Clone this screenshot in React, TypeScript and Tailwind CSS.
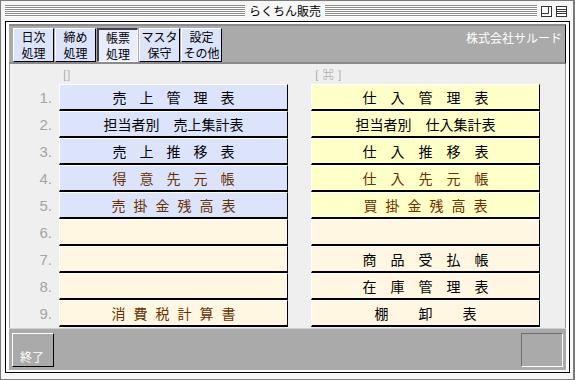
import React from 'react';

const JP = "font-['Noto_Sans_CJK_JP','Noto_Sans',sans-serif]";

const BLUE = 'bg-[#dce4fc]';
const YELLOW = 'bg-[#ffffc8]';
const CREAM = 'bg-[#fff7e1]';

type Item = {
  text: string;
  gap: string; // '' = no spacing, render as one string
  brown?: boolean;
  bg: string;
};

const leftItems: Item[] = [
  { text: '売上管理表', gap: 'gap-[13px]', bg: BLUE },
  { text: '担当者別　売上集計表', gap: '', bg: BLUE },
  { text: '売上推移表', gap: 'gap-[13px]', bg: BLUE },
  { text: '得意先元帳', gap: 'gap-[13px]', brown: true, bg: BLUE },
  { text: '売掛金残高表', gap: 'gap-[8px]', brown: true, bg: BLUE },
  { text: '', gap: '', bg: CREAM },
  { text: '', gap: '', bg: CREAM },
  { text: '', gap: '', bg: CREAM },
  { text: '消費税計算書', gap: 'gap-[8px]', brown: true, bg: CREAM },
];

const rightItems: Item[] = [
  { text: '仕入管理表', gap: 'gap-[14px]', bg: YELLOW },
  { text: '担当者別　仕入集計表', gap: '', bg: YELLOW },
  { text: '仕入推移表', gap: 'gap-[14px]', bg: YELLOW },
  { text: '仕入先元帳', gap: 'gap-[14px]', brown: true, bg: YELLOW },
  { text: '買掛金残高表', gap: 'gap-[8px]', brown: true, bg: YELLOW },
  { text: '', gap: '', bg: CREAM },
  { text: '商品受払帳', gap: 'gap-[14px]', bg: CREAM },
  { text: '在庫管理表', gap: 'gap-[14px]', bg: CREAM },
  { text: '棚卸表', gap: 'gap-[30px]', bg: CREAM },
];

const tabs = [
  ['日次', '処理'],
  ['締め', '処理'],
  ['帳票', '処理'],
  ['マスタ', '保守'],
  ['設定', 'その他'],
];

const Stripes = ({ className }: { className: string }) => (
  <div
    className={`h-[12px] bg-[image:repeating-linear-gradient(to_bottom,#8c8c8c_0px,#8c8c8c_1px,#ffffff_1px,#ffffff_2px)] ${className}`}
  />
);

const ListButton = ({ item }: { item: Item }) => (
  <div
    className={`flex h-[27px] w-[229px] items-center justify-center border-t border-l border-r border-b-2 border-t-white border-l-white border-r-black border-b-black ${item.bg} ${
      item.brown ? 'text-[#6a3000]' : 'text-black'
    } text-[14px] leading-none`}
  >
    {item.gap ? (
      <div className={`flex ${item.gap}`}>
        {item.text.split('').map((c, i) => (
          <span key={i}>{c}</span>
        ))}
      </div>
    ) : (
      <span>{item.text}</span>
    )}
  </div>
);

const App: React.FC = () => {
  return (
    <div className={`flex h-[380px] w-[575px] flex-col overflow-hidden border border-r-2 border-[#7a7a7a] bg-[#f6f6f6] ${JP}`}>
      {/* title bar */}
      <div className="flex h-[20px] items-center pl-[4px] pr-[6px]">
        <Stripes className="w-[240px]" />
        <div className="px-[4px] text-[12px] leading-none text-black">らくちん販売</div>
        <Stripes className="flex-1" />
        <div className="ml-[4px] flex gap-[4px]">
          <svg width="11" height="11" viewBox="0 0 11 11">
            <rect x="0.5" y="0.5" width="10" height="10" fill="#fff" stroke="#333" />
            <path d="M0.5 7.5H7.5V0.5" fill="none" stroke="#333" />
          </svg>
          <svg width="11" height="11" viewBox="0 0 11 11">
            <rect x="0.5" y="0.5" width="10" height="10" fill="#fff" stroke="#333" />
            <path d="M1 3.5H10M1 5.5H10M1 7.5H10" fill="none" stroke="#333" />
          </svg>
        </div>
      </div>

      {/* main box */}
      <div className="ml-[4px] flex h-[352px] w-[565px] flex-col border border-black bg-white px-[3px] py-[2px]">
        {/* header */}
        <div className="flex h-[40px] justify-between border-t-2 border-b-2 border-r border-t-[#8a8a8a] border-b-[#8a8a8a] border-r-black bg-[#aaaaaa] pl-[4px] pr-[3px] pt-[2px]">
          <div className="flex gap-[1px]">
            {tabs.map(([a, b], i) => {
              const selected = i === 2;
              return (
                <div
                  key={i}
                  className={`flex h-[34px] w-[41px] flex-col items-center text-[12px] leading-[16px] text-black ${
                    selected
                      ? 'border-t-2 border-l-2 border-r border-b border-t-[#444] border-l-[#444] border-r-white border-b-white bg-[#e9edff]'
                      : 'border-t border-l border-r border-b border-t-white border-l-white border-r-black border-b-black bg-[#dce4fc]'
                  }`}
                >
                  <span>{a}</span>
                  <span>{b}</span>
                </div>
              );
            })}
          </div>
          <div className="mt-[3px] text-[12px] leading-[14px] text-white">株式会社サルード</div>
        </div>

        {/* body */}
        <div className="flex h-[264px] flex-col border-x border-[#9a9a9a] bg-[#efefef]">
          <div className="flex h-[20px] pt-[4px] text-[11px] leading-[12px] text-[#9a9a9a]">
            <div className="w-[53px]" />
            <div className="w-[252px]">[]</div>
            <div className="flex gap-[4px]">
              <span>[</span>
              <span>⌘</span>
              <span>]</span>
            </div>
          </div>
          {leftItems.map((item, i) => (
            <div key={i} className="flex items-center">
              <div className="w-[49px] pr-[7px] text-right font-['Liberation_Sans',sans-serif] text-[15px] font-light leading-none text-[#a4a4a4]">
                {i + 1}.
              </div>
              <ListButton item={item} />
              <div className="w-[23px]" />
              <ListButton item={rightItems[i]} />
            </div>
          ))}
        </div>

        {/* footer */}
        <div className="flex h-[42px] justify-between border-t border-[#d0d0d0] bg-[#aaaaaa] px-[3px] pt-[4px]">
          <div className="flex h-[34px] w-[42px] items-end border-t border-l border-r border-b border-t-white border-l-white border-r-black border-b-black pb-[3px] pl-[7px] text-[12px] leading-none text-white">
            終了
          </div>
          <div className="h-[34px] w-[42px] border-t border-l border-r border-b border-t-[#6e6e6e] border-l-[#6e6e6e] border-r-white border-b-white" />
        </div>
      </div>
    </div>
  );
};

export default App;
